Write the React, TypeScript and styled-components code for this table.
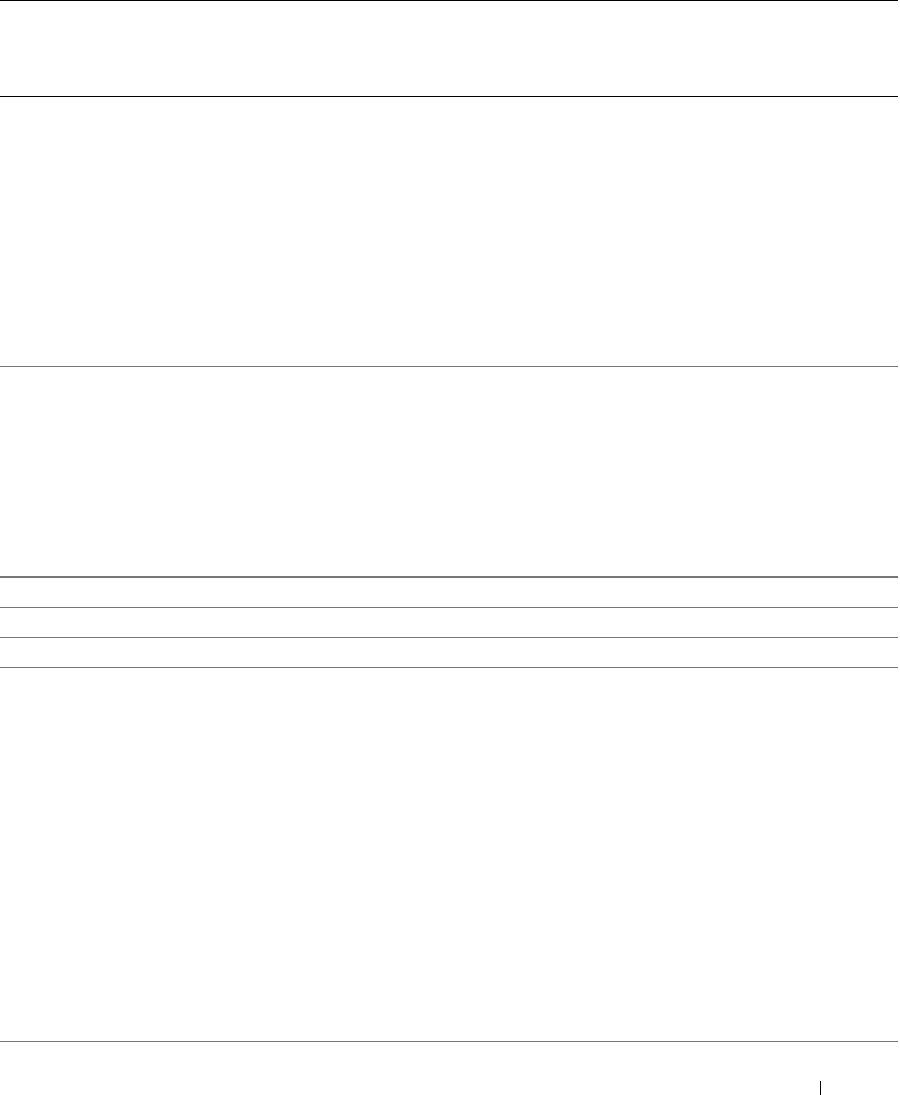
import React from 'react';
import styled, { createGlobalStyle } from 'styled-components';

const GlobalStyle = createGlobalStyle`
  html, body {
    margin: 0;
    padding: 0;
    background: #fff;
    font-family: "Liberation Serif", serif;
  }
`;

const Page = styled.div`
  width: 898px;
  height: 1095px;
  overflow: hidden;
  border-top: 1px solid #000;
`;

const Section = styled.div<{ $height: number; $rule: string; $weight?: number }>`
  height: ${(p) => p.$height}px;
  border-bottom: ${(p) => p.$weight || 1}px solid ${(p) => p.$rule};
`;

const Footer = styled.div`
  display: flex;
  justify-content: flex-end;
  padding-right: 77px;
  padding-top: 39px;
`;

const Separator = styled.span`
  display: block;
  width: 0;
  height: 20px;
  border-left: 1px solid #000;
`;

const rows = [0, 1, 2];

const App = () => (
  <>
    <GlobalStyle />
    <Page>
      <Section $height={95} $rule="#000" />
      <Section $height={269} $rule="#777" />
      <Section $height={209} $rule="#777" $weight={2} />
      {rows.map((r) => (
        <Section key={r} $height={29} $rule="#777" />
      ))}
      <Section $height={373} $rule="#777" />
      <Footer>
        <Separator />
      </Footer>
    </Page>
  </>
);

export default App;
